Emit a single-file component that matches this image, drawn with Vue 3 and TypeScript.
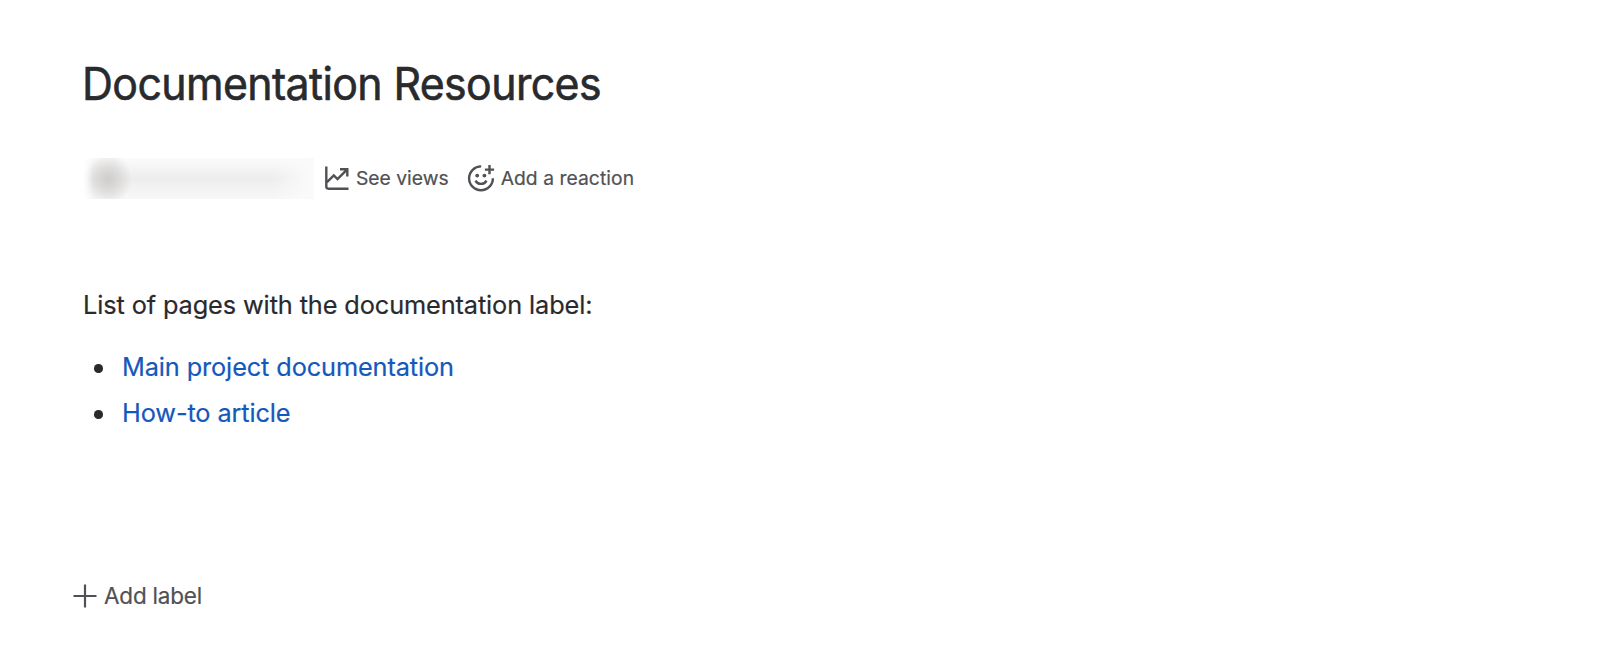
<script setup lang="ts">
interface PageLink {
  title: string
}

const links: PageLink[] = [
  { title: 'Main project documentation' },
  { title: 'How-to article' },
]
</script>

<template>
  <main class="page">
    <h1 class="title">Documentation Resources</h1>
    <div class="meta">
      <div class="byline" aria-hidden="true"></div>
      <button class="action views" type="button">
        <svg width="24" height="24" viewBox="0 0 24 24" fill="none" stroke="currentColor" stroke-width="2.4">
          <path d="M1.3 0.6V20.6Q1.3 22.7 3.4 22.7H23.5M2 16.2L8.8 9.4L12.5 13.1L22 3.6M15 3.2H22.3V10.4" />
        </svg>
        <span>See views</span>
      </button>
      <button class="action react" type="button">
        <svg width="28" height="28" viewBox="0 0 28 28" fill="none" stroke="currentColor" stroke-width="2.4">
          <path d="M14.2 2.4A11.9 11.9 0 1 0 25.9 14.2M22.5 1V10.2M17.9 5.6H27.1" />
          <path d="M8.5 16.6Q10.2 19.9 14 19.9T19.5 16.6" />
          <circle cx="10.2" cy="11.6" r="1.9" fill="currentColor" stroke="none" />
          <circle cx="17.4" cy="11.6" r="1.9" fill="currentColor" stroke="none" />
        </svg>
        <span>Add a reaction</span>
      </button>
    </div>
    <p class="intro">List of pages with the documentation label:</p>
    <ul class="links">
      <li v-for="link in links" :key="link.title"><a>{{ link.title }}</a></li>
    </ul>
    <button class="label" type="button">
      <svg width="24" height="25" viewBox="0 0 24 25" fill="none" stroke="currentColor" stroke-width="2.2">
        <path d="M12 1.5V24.5M0.5 13H23.5" />
      </svg>
      <span>Add label</span>
    </button>
  </main>
</template>

<style>
body { margin: 0; background: #fff; }
</style>

<style scoped>
.page { box-sizing: border-box; height: 658px; padding: 57px 83px 0; overflow: hidden; background: #fff; color: #292a2d; font-family: Inter, "Liberation Sans", sans-serif; -webkit-text-stroke: 0.2px; }
.title { margin: 0 0 0 -1px; font-size: 44.8px; line-height: 54px; font-weight: 400; letter-spacing: -0.63px; white-space: nowrap; -webkit-text-stroke: 0.6px; transform: scaleX(0.956); transform-origin: 0 50%; }
.meta { display: flex; align-items: center; height: 40px; margin-top: 47px; }
.byline {
  width: 231px;
  height: 41px;
  background:
    linear-gradient(90deg, #fff, transparent 10px),
    radial-gradient(ellipse 24px 26px at 25px 21px, #cfcdcc, #cfcdcc99 45%, #cfcdcc00),
    linear-gradient(90deg, transparent 190px, #fafafa 225px),
    linear-gradient(#fbfbfb, #ededed 50%, #f8f8f8);
}
button { padding: 0; border: 0; background: none; font: inherit; color: #505154; }
.action { display: flex; align-items: center; font-size: 19.3px; line-height: 40px; white-space: nowrap; }
.views { gap: 7px; margin-left: 11px; }
.react { gap: 6px; margin-left: 18px; letter-spacing: 0.05px; }
.intro { margin: 87px 0 0; font-size: 25.3px; line-height: 40px; letter-spacing: -0.105px; }
.links { margin: 22px 0 0; padding: 0 0 0 39px; list-style: none; font-size: 25.3px; line-height: 40px; letter-spacing: -0.11px; }
.links li { display: flex; align-items: center; }
.links li::before { content: ""; width: 8.5px; height: 8.5px; margin: 3px 19.5px 0 -28px; border-radius: 50%; background: #292a2d; }
.links li + li { margin-top: 6px; }
.links a { color: #1558bc; }
.label { display: flex; align-items: center; gap: 7px; height: 40px; margin: 142px 0 0 -10px; font-size: 22.5px; letter-spacing: -0.2px; }
</style>
